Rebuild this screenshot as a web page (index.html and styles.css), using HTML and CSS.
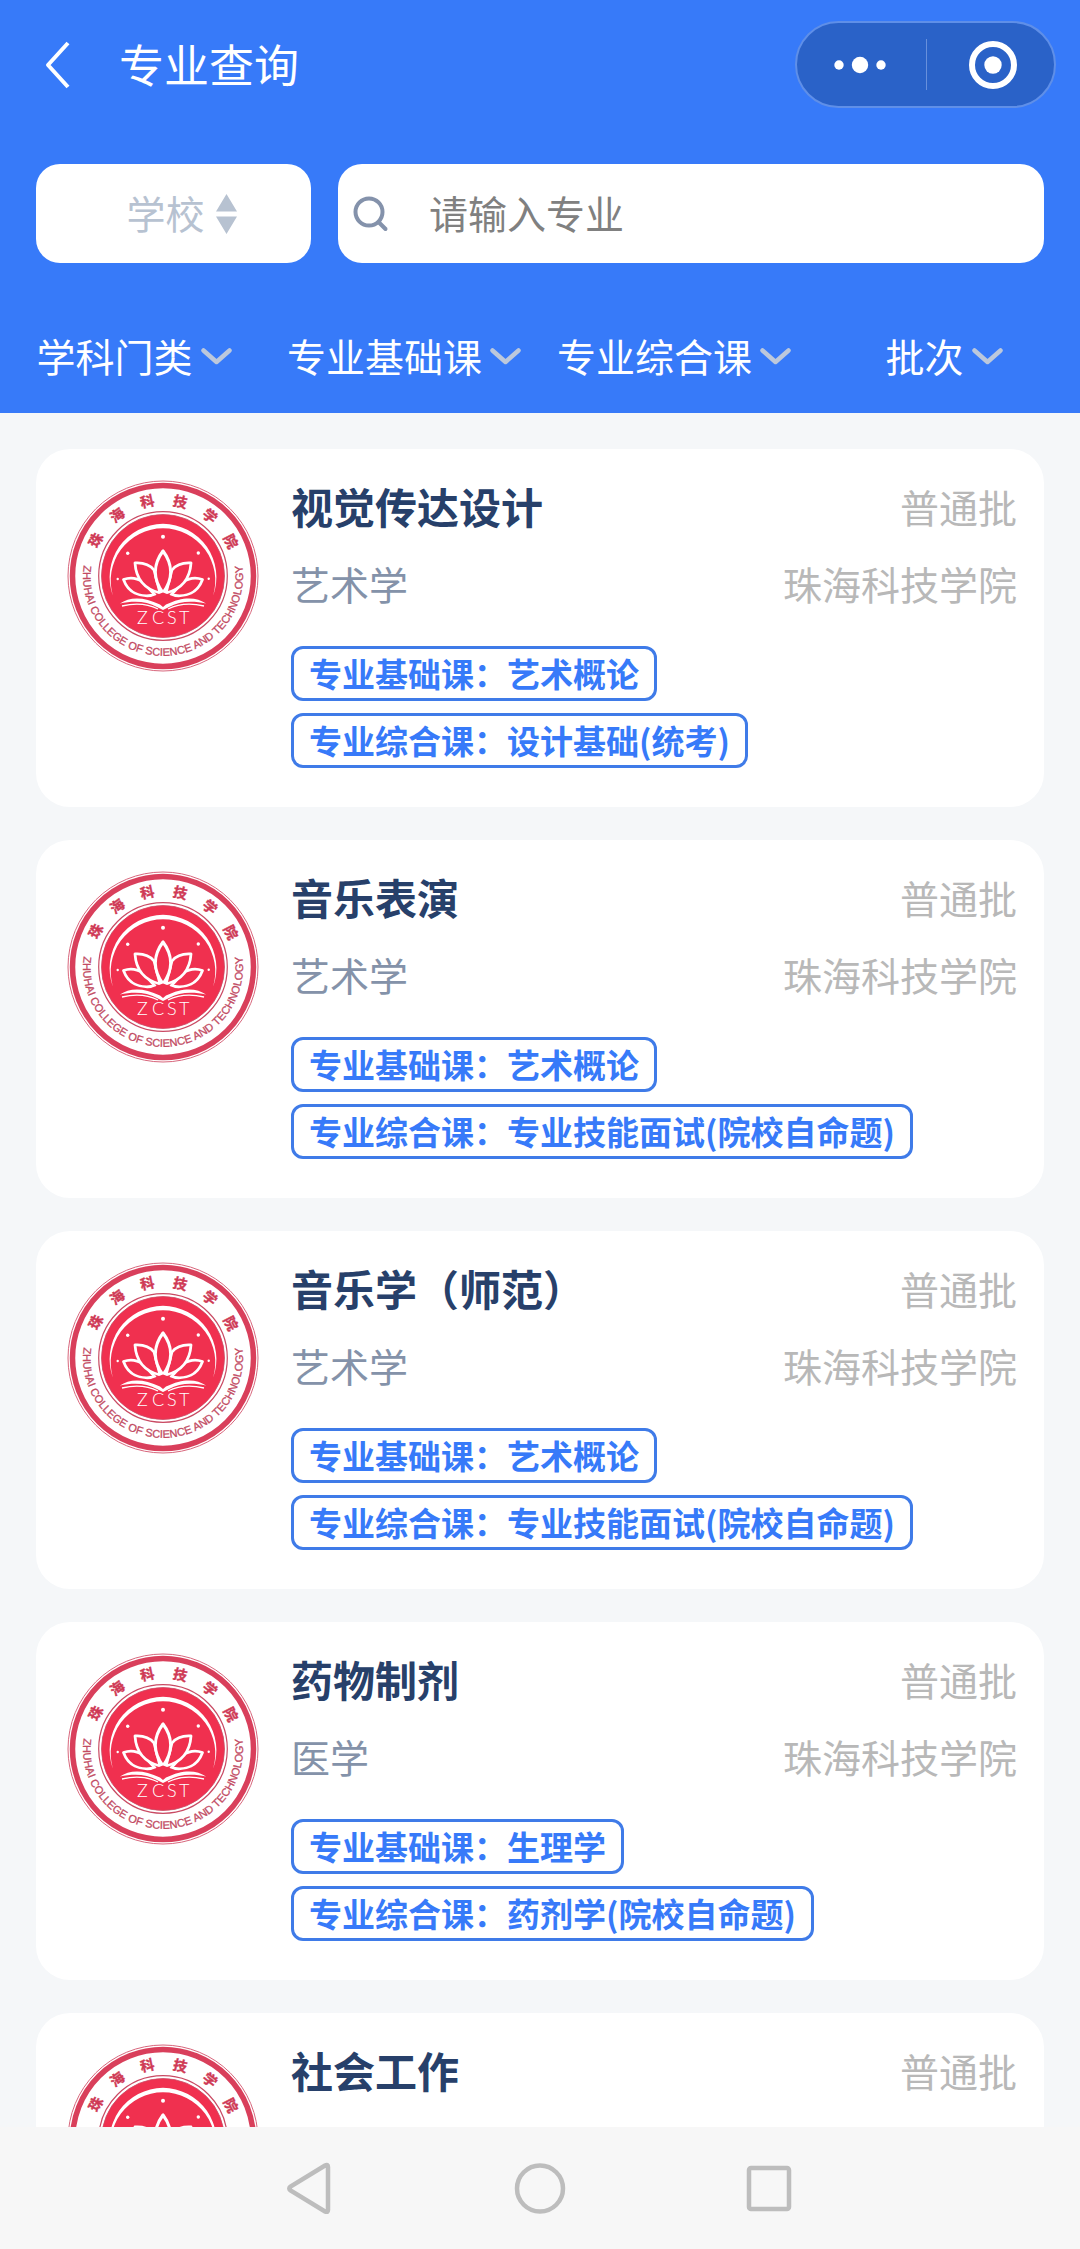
FILE: index.html
```html
<!DOCTYPE html>
<html lang="zh-CN">
<head>
<meta charset="utf-8">
<meta name="viewport" content="width=device-width, initial-scale=1">
<title>专业查询</title>
<link rel="stylesheet" href="styles.css">
</head>
<body>
<svg class="sprite" aria-hidden="true">
  <defs>
    <path id="motto-arc" d="M-75.2-27.4A80 80 0 1 0 75.2-27.4"/>
    <symbol id="chevron" viewBox="0 0 31 17">
      <path d="M2.5 2.5 15.5 14 28.5 2.5" fill="none" stroke="#bcc8dc" stroke-width="4.5" stroke-linecap="round" stroke-linejoin="round"/>
    </symbol>
    <symbol id="crest" viewBox="-96 -96 192 192">
      <circle r="95" fill="#fff" stroke="#d8667c"/>
      <circle r="90.5" fill="none" stroke="#d93f5b" stroke-width="5.500"/>
      <circle r="64.3" fill="none" stroke="#c94a63" stroke-width="1.2"/>
      <circle r="61.5" fill="#f0304f" stroke="#c94a63" stroke-width=".8"/>
      <path fill="#fff" d="M-50 20A53.4 53.4 0 1 1 50 20A52.3 52.3 0 1 0-50 20Z"/>
      <g fill="#fff">
        <circle cy="-39.3" r="2"/><circle cx="-35.3" cy="-22.7" r="1.7"/><circle cx="35.3" cy="-23" r="1.7"/>
        <circle cx="-45.3" cy="3" r="1.2"/><circle cx="45.7" cy="2.7" r="1.2"/>
      </g>
      <g fill="#f0304f" stroke="#fff" stroke-width="2.8" stroke-linejoin="round">
        <path d="M-39.5 3.5C-33 1-26 2-20 6L-8 19C-24 22-35 16-39.5 3.5Z"/>
        <path d="M39.5 3.5C33 1 26 2 20 6L8 19C24 22 35 16 39.5 3.5Z"/>
        <path d="M-28-13C-20-13.500-13-11-9-6L-3 17C-19 13-27 3-28-13Z"/>
        <path d="M28-13C20-13.500 13-11 9-6L3 17C19 13 27 3 28-13Z"/>
        <path stroke-width="3.200" d="M0-25C-9-13-11 2 0 17C11 2 9-13 0-25Z"/>
      </g>
      <path fill="#f0304f" d="M-12 21 0 16.500 12 21 0 27Z"/>
      <path fill="#fff" d="M-43 27.500C-34 21-20 20-3 28.500L0 31 3 28.500C20 20 34 21 43 27.500C30 24.500 16 25 6 31L0 34-6 31C-16 25-30 24.500-43 27.500Z"/>
      <path fill="none" stroke="#fff" stroke-width="1.300" d="M-41 30C-28 27-15 28-5 33M41 30C28 27 15 28 5 33"/>
      <text class="crest-code" x="-26 -11 4 16" y="48">ZCST</text>
      <g class="crest-name">
        <text y="-71" transform="rotate(-62)">珠</text>
        <text y="-71" transform="rotate(-37)">海</text>
        <text y="-71" transform="rotate(-12)">科</text>
        <text y="-71" transform="rotate(13)">技</text>
        <text y="-71" transform="rotate(38)">学</text>
        <text y="-71" transform="rotate(63)">院</text>
      </g>
      <text class="crest-motto"><textPath href="#motto-arc" startOffset="50%">ZHUHAI COLLEGE OF SCIENCE AND TECHNOLOGY</textPath></text>
    </symbol>
  </defs>
</svg>

<div class="app">
  <header class="header">
    <div class="topbar">
      <button class="back" type="button" aria-label="返回">
        <svg width="26" height="48" viewBox="0 0 26 48"><path d="M23 2 3 24l20 22" fill="none" stroke="#fff" stroke-width="4" stroke-linejoin="round"/></svg>
      </button>
      <h1 class="title">专业查询</h1>
      <div class="capsule">
        <button class="capsule-btn capsule-more" type="button" aria-label="更多">
          <svg width="52" height="18" viewBox="0 0 52 18" fill="#fff"><circle cx="5" cy="9" r="4.700"/><circle cx="26" cy="9" r="8.200"/><circle cx="47" cy="9" r="4.700"/></svg>
        </button>
        <button class="capsule-btn capsule-close" type="button" aria-label="关闭">
          <svg width="48" height="48" viewBox="0 0 48 48"><circle cx="24" cy="24" r="21" fill="none" stroke="#fff" stroke-width="6"/><circle cx="24" cy="24" r="8.700" fill="#fff"/></svg>
        </button>
      </div>
    </div>
    <form class="search-row">
      <label class="school">
        <select class="select" aria-label="学校"><option>学校</option></select>
        <svg width="21" height="40" viewBox="0 0 21 40" fill="#b7c2d1"><path d="M10.500 0 21 17.500H0ZM10.500 40 21 22.500H0Z"/></svg>
      </label>
      <label class="search">
        <svg width="36" height="36" viewBox="0 0 36 36" fill="none" stroke="#8492ab" stroke-width="4" stroke-linecap="round"><circle cx="16" cy="16" r="13.500"/><path d="M25.500 26 32.500 33"/></svg>
        <input class="search-input" type="text" placeholder="请输入专业" aria-label="专业">
      </label>
    </form>
    <nav class="filters">
      <label class="filter"><select class="select" aria-label="学科门类"><option>学科门类</option></select><svg width="31" height="17"><use href="#chevron"/></svg></label>
      <label class="filter"><select class="select" aria-label="专业基础课"><option>专业基础课</option></select><svg width="31" height="17"><use href="#chevron"/></svg></label>
      <label class="filter"><select class="select" aria-label="专业综合课"><option>专业综合课</option></select><svg width="31" height="17"><use href="#chevron"/></svg></label>
      <label class="filter"><select class="select" aria-label="批次"><option>批次</option></select><svg width="31" height="17"><use href="#chevron"/></svg></label>
    </nav>
  </header>

  <main class="list">
    <article class="card">
      <svg class="logo"><use href="#crest"/></svg>
      <div class="info">
        <div class="row"><h2 class="major">视觉传达设计</h2><span class="meta">普通批</span></div>
        <div class="row"><span class="subject">艺术学</span><span class="meta">珠海科技学院</span></div>
        <div class="tags"><span class="tag">专业基础课：艺术概论</span><span class="tag">专业综合课：设计基础(统考)</span></div>
      </div>
    </article>
    <article class="card">
      <svg class="logo"><use href="#crest"/></svg>
      <div class="info">
        <div class="row"><h2 class="major">音乐表演</h2><span class="meta">普通批</span></div>
        <div class="row"><span class="subject">艺术学</span><span class="meta">珠海科技学院</span></div>
        <div class="tags"><span class="tag">专业基础课：艺术概论</span><span class="tag">专业综合课：专业技能面试(院校自命题)</span></div>
      </div>
    </article>
    <article class="card">
      <svg class="logo"><use href="#crest"/></svg>
      <div class="info">
        <div class="row"><h2 class="major">音乐学（师范）</h2><span class="meta">普通批</span></div>
        <div class="row"><span class="subject">艺术学</span><span class="meta">珠海科技学院</span></div>
        <div class="tags"><span class="tag">专业基础课：艺术概论</span><span class="tag">专业综合课：专业技能面试(院校自命题)</span></div>
      </div>
    </article>
    <article class="card">
      <svg class="logo"><use href="#crest"/></svg>
      <div class="info">
        <div class="row"><h2 class="major">药物制剂</h2><span class="meta">普通批</span></div>
        <div class="row"><span class="subject">医学</span><span class="meta">珠海科技学院</span></div>
        <div class="tags"><span class="tag">专业基础课：生理学</span><span class="tag">专业综合课：药剂学(院校自命题)</span></div>
      </div>
    </article>
    <article class="card">
      <svg class="logo"><use href="#crest"/></svg>
      <div class="info">
        <div class="row"><h2 class="major">社会工作</h2><span class="meta">普通批</span></div>
      </div>
    </article>
  </main>

  <footer class="system-bar">
    <button type="button" aria-label="后退"><svg width="52" height="52" viewBox="0 0 52 52"><path d="M41 3.500Q44 2 44 5V48Q44 51 41 49.500L6.500 28.500Q4 26.500 6.500 24.500Z"/></svg></button>
    <button type="button" aria-label="主页"><svg width="52" height="52" viewBox="0 0 52 52"><circle cx="26" cy="26.500" r="23"/></svg></button>
    <button type="button" aria-label="最近任务"><svg width="52" height="52" viewBox="0 0 52 52"><rect x="5" y="6" width="40" height="41" rx="2"/></svg></button>
  </footer>
</div>
</body>
</html>
```
FILE: styles.css
```css
* {
  box-sizing: border-box;
}

body {
  margin: 0;
  background: #f5f7f9;
  font-family: "Noto Sans CJK SC", "Noto Sans", sans-serif;
  font-size: 39px;
  line-height: 54px;
}

h1,
h2 {
  margin: 0;
}

button {
  padding: 0;
  border: 0;
  background: none;
}

svg {
  display: block;
  flex: none;
}

.sprite {
  position: absolute;
  width: 0;
  height: 0;
}

.app {
  display: flex;
  flex-direction: column;
  height: 100vh;
}

/* Header */
.header {
  flex: none;
  background: #377af9;
  color: #fff;
}

.topbar {
  display: flex;
  align-items: center;
  padding: 21px 24px 0 45px;
}

.title {
  margin-left: 48px;
  padding-bottom: 2px;
  font-size: 45px;
  font-weight: 400;
}

.capsule {
  display: grid;
  grid-template-columns: 1fr 1fr;
  width: 261px;
  height: 87px;
  margin-left: auto;
  padding: 16px 0;
  border: 2px solid #5f8fe8;
  border-radius: 44px;
  background: #2a62c8;
}

.capsule-btn {
  display: flex;
  align-items: center;
  justify-content: center;
}

.capsule-more {
  padding-right: 2px;
}

.capsule-close {
  padding-left: 6px;
  border-left: 1px solid #6890dc;
}

.search-row {
  display: flex;
  gap: 27px;
  margin: 0;
  padding: 56px 36px 0;
}

.school,
.search {
  display: flex;
  align-items: center;
  height: 99px;
  border-radius: 24px;
  background: #fff;
}

.school {
  flex: none;
  gap: 10px;
  width: 275px;
  justify-content: center;
  padding-left: 16px;
  color: #b7c2d1;
}

.select {
  appearance: none;
  padding: 0 0 3px;
  border: 0;
  background: none;
  color: inherit;
  font: inherit;
}

.search {
  flex: 1;
  gap: 40px;
  padding: 0 24px 0 15px;
}

.search-input {
  flex: 1;
  min-width: 0;
  padding: 0 0 3px;
  border: 0;
  outline: 0;
  background: none;
  color: #333;
  font: inherit;
}

.search-input::placeholder {
  color: #808080;
  opacity: 1;
}

.filters {
  display: grid;
  grid-template-columns: repeat(4, 1fr);
  padding: 65px 0 28px;
}

.filter {
  display: flex;
  align-items: center;
  justify-content: center;
  gap: 7px;
  padding-right: 2px;
}

/* Majors */
.list {
  display: flex;
  flex: 1;
  flex-direction: column;
  gap: 33px;
  min-height: 0;
  padding: 36px 36px 0;
  overflow: hidden auto;
  scrollbar-width: none;
}

.card {
  display: flex;
  flex: none;
  gap: 32px;
  min-height: 358px;
  padding: 31px 27px 39px 31px;
  border-radius: 34px;
  background: #fff;
}

.logo {
  width: 192px;
  height: 192px;
}

.info {
  display: flex;
  flex: 1;
  flex-direction: column;
  gap: 25px;
}

.row {
  display: flex;
  justify-content: space-between;
  line-height: 52px;
}

.major {
  color: #27406a;
  font-size: 42px;
  font-weight: 700;
}

.subject {
  color: #8492a9;
}

.meta {
  color: #b8b8b8;
}

.tags {
  display: flex;
  flex-direction: column;
  align-items: flex-start;
  gap: 12px;
  margin-top: 12px;
}

.tag {
  padding: 0 15px;
  border: 3px solid #3f7be8;
  border-radius: 12px;
  color: #377af9;
  font-size: 33px;
  font-weight: 700;
  line-height: 49px;
}

/* Crest lettering */
.crest-code {
  fill: #fff;
  font-family: Lato, sans-serif;
  font-size: 18px;
  font-weight: 300;
}

.crest-name {
  fill: #cf3955;
  stroke: #cf3955;
  stroke-width: 0.4px;
  font-size: 14px;
  font-weight: 700;
  text-anchor: middle;
}

.crest-motto {
  fill: #c24a62;
  stroke: #c24a62;
  stroke-width: 0.3px;
  font-family: "Liberation Sans", sans-serif;
  font-size: 11px;
  text-anchor: middle;
}

/* Device navigation */
.system-bar {
  display: flex;
  flex: none;
  align-items: center;
  justify-content: center;
  gap: 178px;
  height: 122px;
  background: #f7f7f7;
  fill: none;
  stroke: #bdbdbd;
  stroke-width: 4.5px;
}
```
